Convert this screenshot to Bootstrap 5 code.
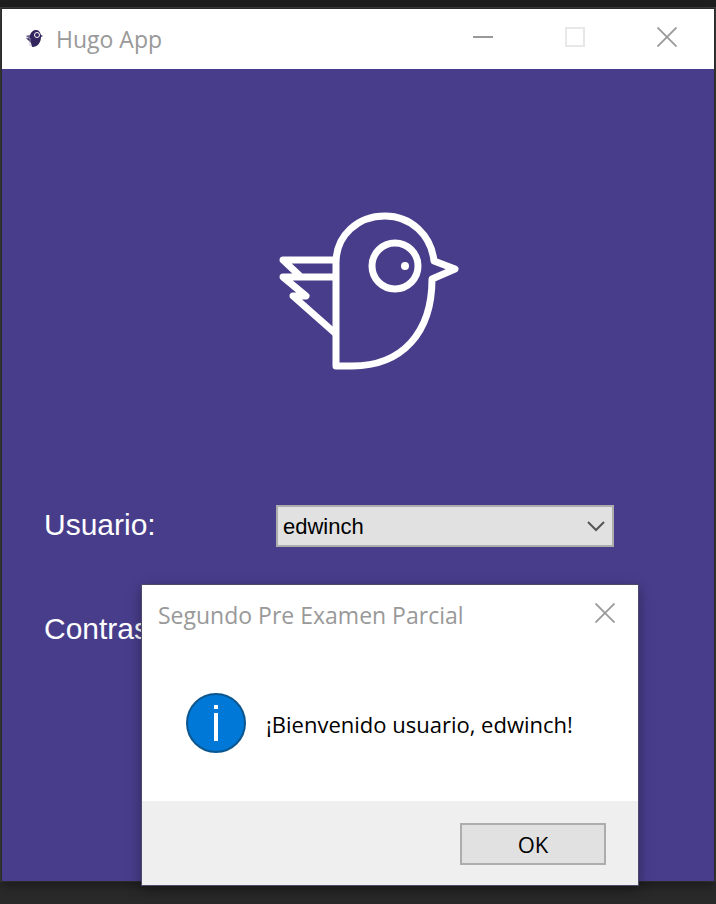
<!DOCTYPE html>
<html lang="es">
<head>
<meta charset="utf-8">
<meta name="viewport" content="width=device-width, initial-scale=1">
<title>Hugo App</title>
<link href="https://cdn.jsdelivr.net/npm/bootstrap@5.3.0/dist/css/bootstrap.min.css" rel="stylesheet">
<style>
  body { background: #29292a; font-family: "Open Sans", "Noto Sans", sans-serif; color: #000; }
  .desktop { padding: 9px 2px 23px; background: linear-gradient(#1e1e1e 7px, #3c3c3c 7px, #3c3c3c calc(100% - 22px), #29292a calc(100% - 22px)); }
  .app-window { background: #483d8b; box-shadow: 0 0 0 1px #2b2b2b, 0 4px 10px rgba(0, 0, 0, .4); }
  .titlebar { height: 60px; }
  .window-title { font-size: 23px; line-height: 32px; font-weight: 400; color: #999; }
  .win-btn { color: #999; width: 92px; height: 52px; }
  .win-btn:disabled { color: #dcdcdc; }
  .app-window .titlebar { padding-right: 1px; }
  .message-window .win-btn { width: 66px; }
  .logo-area { padding: 131px 0 120px 24px; }
  .login-form { padding: 5px 100px 230px 42px; font-family: "Liberation Sans", Arial, sans-serif; }
  .form-line { min-height: 42px; margin-bottom: 62px; }
  .form-line:last-child { margin-bottom: 0; }
  .field-label { width: 232px; font-size: 30px; line-height: 40px; padding-bottom: 2px; color: #fff; }
  .field-box { height: 42px; border: 2px solid #adadad; background-color: #e1e1e1; color: #000; font-size: 22px; line-height: 36px; padding: 2px 40px 0 5px; }
  select.field-box { appearance: none; }
  .select-arrow { right: 9px; top: 14px; pointer-events: none; }
  .message-window { left: 142px; top: 585px; width: 496px; box-shadow: 0 0 0 1px #4b4a6b, 0 4px 12px 1px rgba(0, 0, 0, .35); }
  .message-body { padding: 48px 44px; gap: 20px; }
  .message-text { font-size: 22px; line-height: 32px; padding-top: 2px; }
  .message-footer { background: #efefef; padding: 22px 32px 20px; }
  .ok-btn { width: 146px; height: 42px; border: 2px solid #adadad; background: #e1e1e1; color: #000; font-size: 22px; line-height: 32px; }
</style>
<script src="https://cdn.jsdelivr.net/npm/bootstrap@5.3.0/dist/js/bootstrap.bundle.min.js"></script>
</head>
<body>
<div class="desktop position-relative">
  <main class="app-window">
    <header class="titlebar bg-white d-flex align-items-center">
      <svg class="ms-4 flex-shrink-0" width="18" height="18" viewBox="0 0 18 18" aria-hidden="true">
        <path d="M4 5C5 2 7 0 10 0c3 0 4 2 5 5l2 1-2 1c0 5-3 10-9 10l-1-4-5-5h3L0 6z" fill="#33255e"/>
        <path d="M0 6h4M0 8h4v8" fill="none" stroke="#b7b0c8" stroke-width=".8"/>
        <circle cx="11" cy="5" r="2.500" fill="none" stroke="#fff"/>
      </svg>
      <h1 class="window-title mb-0 ms-2 ps-1">Hugo App</h1>
      <div class="d-flex ms-auto align-self-start">
        <button type="button" class="win-btn btn rounded-0 border-0 p-0" aria-label="Minimizar"><svg width="20" height="20"><path d="M0 10h20" stroke="currentColor" stroke-width="2"/></svg></button>
        <button type="button" class="win-btn btn rounded-0 border-0 p-0" aria-label="Maximizar" disabled><svg width="20" height="20"><path d="M1 1h18v18H1z" fill="none" stroke="currentColor" stroke-width="2"/></svg></button>
        <button type="button" class="win-btn btn rounded-0 border-0 p-0" aria-label="Cerrar"><svg width="20" height="20"><path d="M.5.5l19 19M19.500.5l-19 19" stroke="currentColor" stroke-width="1.800"/></svg></button>
      </div>
    </header>
    <div class="logo-area d-flex justify-content-center">
      <svg width="220" height="180" viewBox="0 0 220 180" role="img" aria-label="Hugo">
        <g fill="none" stroke="#fff" stroke-width="7" stroke-linejoin="round">
          <path d="M76 166V63C76 35 98 16 125 16C151 16 171 35 174 61L195 69L172 79C172 133 142 166 92 166Z"/>
          <path d="M76 60H23L40 76M76 77H23L46 96H33L76 134"/>
          <circle cx="135" cy="66" r="23"/>
        </g>
        <circle cx="145" cy="66" r="4" fill="#fff"/>
      </svg>
    </div>
    <form class="login-form">
      <div class="form-line d-flex align-items-center">
        <label class="field-label flex-shrink-0" for="usuario">Usuario:</label>
        <div class="position-relative flex-grow-1">
          <select id="usuario" class="field-box w-100 rounded-0 d-block"><option>edwinch</option></select>
          <svg class="select-arrow position-absolute" width="18" height="14" viewBox="0 0 18 14" aria-hidden="true"><path d="M1 3l8 8 8-8" fill="none" stroke="#555" stroke-width="2"/></svg>
        </div>
      </div>
      <div class="form-line d-flex align-items-center">
        <label class="field-label" for="clave">Contras</label>
        <input id="clave" type="password" class="field-box flex-grow-1 rounded-0">
      </div>
    </form>
  </main>
  <section class="message-window position-absolute bg-white" role="dialog" aria-labelledby="msg-title">
    <header class="titlebar d-flex align-items-center ps-3">
      <h2 id="msg-title" class="window-title mb-0">Segundo Pre Examen Parcial</h2>
      <button type="button" class="win-btn btn rounded-0 border-0 p-0 ms-auto align-self-start" aria-label="Cerrar"><svg width="20" height="20"><path d="M.5.5l19 19M19.500.5l-19 19" stroke="currentColor" stroke-width="1.800"/></svg></button>
    </header>
    <div class="message-body d-flex align-items-center">
      <svg class="flex-shrink-0" width="60" height="60" viewBox="0 0 60 60" aria-hidden="true">
        <circle cx="30" cy="30" r="29" fill="#0078d7" stroke="#0b568f" stroke-width="2"/>
        <path d="M28 12h4v4h-4zM28 20h4v28h-4z" fill="#fff"/>
      </svg>
      <p class="message-text mb-0 text-nowrap">¡Bienvenido usuario, edwinch!</p>
    </div>
    <footer class="message-footer d-flex justify-content-end">
      <button type="button" class="ok-btn btn rounded-0 p-0">OK</button>
    </footer>
  </section>
</div>
</body>
</html>
